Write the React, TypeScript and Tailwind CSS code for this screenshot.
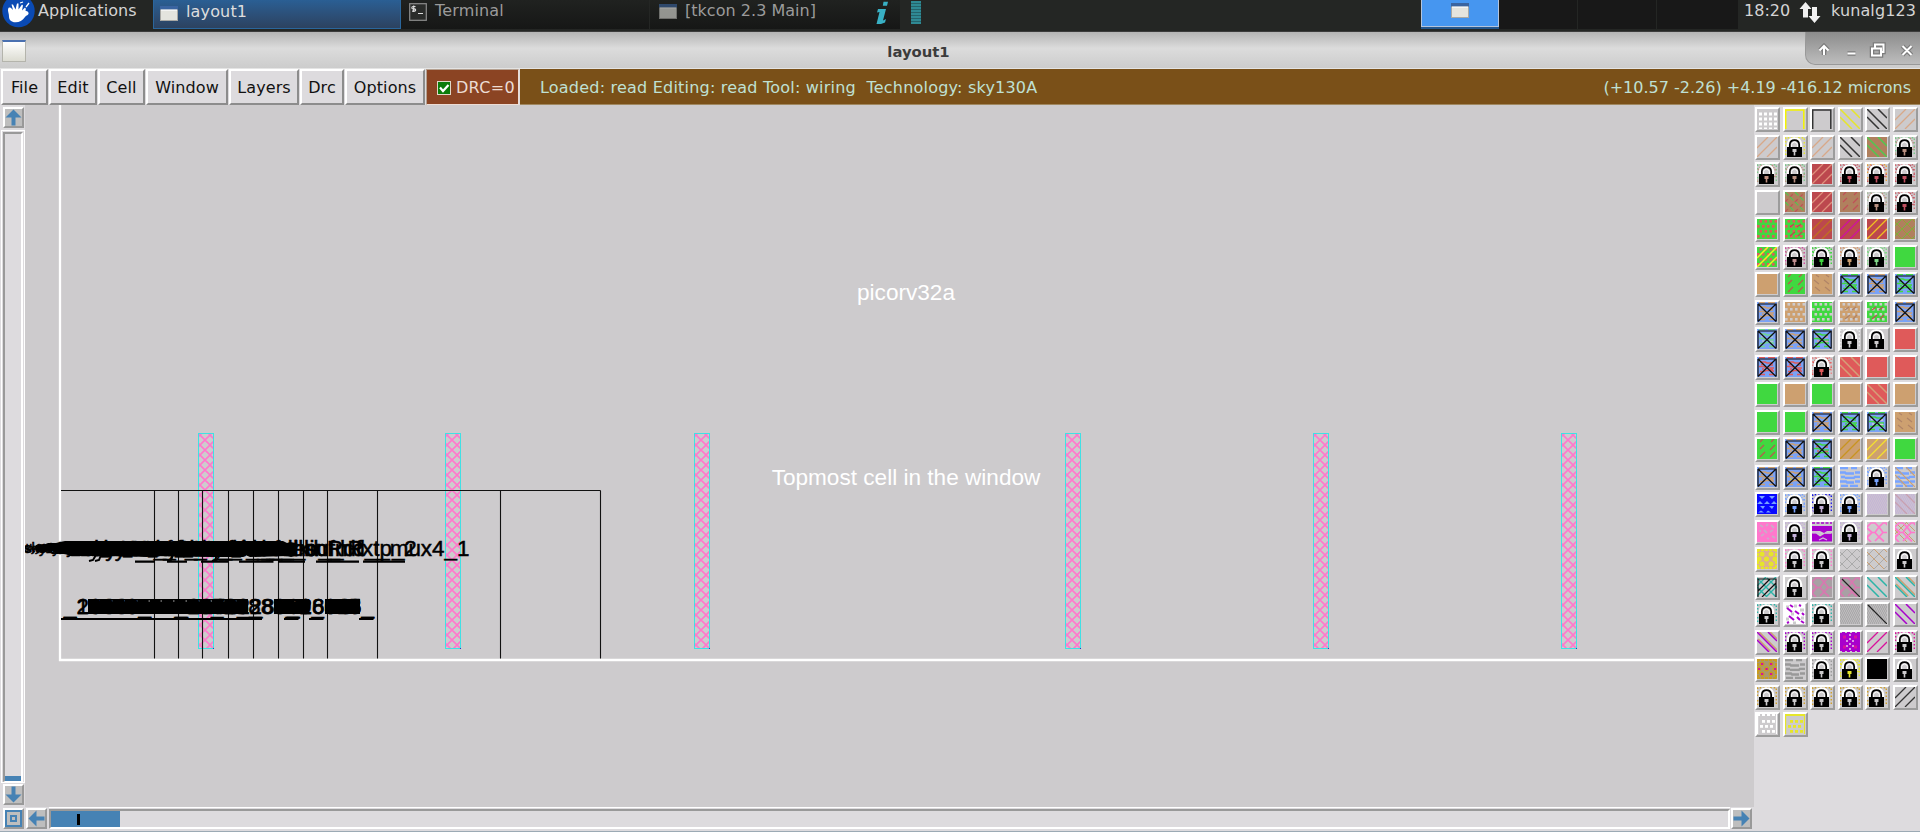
import React from "react";

const SANS = "font-['DejaVu_Sans',sans-serif]";

/* ---------- layer palette ---------- */

type Tile = { k: string; a?: string; b?: string; c?: string };

const GRN = "#40d840";
const TAN = "#cda070";
const RED = "#bc484e";
const CORAL = "#df5a5a";
const BRN = "#b0805e";
const DARK = "#333333";
const YEL = "#e6e62a";
const GOLD = "#cfa02c";
const BLU = "#78a4ff";
const LAV = "#c4b0d8";
const PNK = "#ff78cc";
const PUR = "#a800cc";
const TEAL = "#2cb4a8";
const MAG = "#d8109c";
const GRY = "#999999";
const BG = "#cdcbcd";

const s = (a: string): Tile => ({ k: "solid", a });
const bk = (a: string, b = BG, c?: string): Tile => ({ k: "back", a, b, c });
const fw = (a: string, b = BG): Tile => ({ k: "fwd", a, b });
const lk = (a: string = BG, b: string = a): Tile => ({ k: "lock", a, b });
const xb = (a: string, b: string = a): Tile => ({ k: "xbox", a, b });
const dt = (a: string, b: string, c?: string): Tile => ({ k: "dots", a, b, c });
const fl = (a: string, b: string): Tile => ({ k: "fleck", a, b });
const wv = (a: string, b = BG, c?: string): Tile => ({ k: "wave", a, b, c });
const cr = (a: string, b = BG, c: string = a): Tile => ({ k: "cross", a, b, c });

const TILES: Tile[] = [
  { k: "grid", a: "#ffffff" }, { k: "frame", a: "#f4f400" }, { k: "frame", a: "#333333" }, bk(YEL), bk(DARK), fw("#d8a888"),
  fw("#d8a888"), lk(YEL, BG), fw("#d8a888"), bk(DARK), bk("#50c850", BRN), lk("#7cc88a", "#b89080"),
  lk("#7cc88a", "#c09080"), lk("#7cc88a", "#b89080"), fw("#e0907c", RED), lk("#d07078", "#c05060"), lk("#e8a040", "#c05060"), lk("#d07078", "#c05060"),
  s(BG), { k: "weave", a: "#50c850", b: BRN, c: "#c05058" }, fw("#e0907c", RED), fl("#c05058", BRN), lk("#a8c0a0", "#b89080"), lk("#d07078", "#c05060"),
  dt(CORAL, GRN), dt(CORAL, GRN, RED), fw("#c07020", RED), fw("#d010a0", RED), fw("#f0c020", RED), cr("#70b840", BRN, "#98a030"),
  { k: "dotline", a: "#f0f020", b: GRN, c: CORAL }, lk("#d050a0", "#c09090"), lk(GRN), lk("#dc9a70", TAN), lk("#80d888"), s(GRN),
  s(TAN), fl("#b85850", GRN), { k: "bfleck", a: "#b08468", b: TAN }, xb(GRN), xb(TAN), xb(GRN),
  xb(TAN), dt(BG, TAN), dt(BG, GRN), dt(BG, TAN, "#b08468"), dt(BG, GRN, "#b85850"), xb(TAN, "#c8b8a8"),
  xb("#70d890", "#b0c8d0"), xb(TAN, "#a8b0c0"), xb(GRN, "#d89ab0"), lk("#eeeeee", BG), lk(BG), s(CORAL),
  xb(CORAL), xb(CORAL), lk("#e88888", CORAL), bk("#d4a078", CORAL), s(CORAL), s(CORAL),
  s(GRN), s(TAN), s(GRN), s(TAN), bk("#d4a078", CORAL), s(TAN),
  s(GRN), s(GRN), xb(TAN), xb(GRN), xb(GRN, "#d8c8d8"), { k: "bfleck", a: "#b08468", b: TAN },
  fl("#b85850", GRN), xb(TAN), xb(GRN, "#d06060"), fw("#c89420", TAN), fw("#f4e030", TAN), s(GRN),
  xb(TAN), xb(TAN, "#e0c840"), xb(GRN), wv(BLU), lk(BLU), wv(BLU, BG, TAN),
  { k: "tri", a: "#0808ff", b: BLU }, lk(BLU), lk("#1818e8", LAV), lk(BLU), { k: "dither", a: LAV }, { k: "dither", a: LAV, c: "#c8a0b0" },
  { k: "pebble", a: PNK, b: "#ccaac8" }, lk(LAV), { k: "band", a: PUR, b: "#d0b8d8" }, lk(LAV), { k: "rings", a: PNK }, { k: "rings", a: PNK, c: TAN },
  { k: "sun", a: YEL, b: "#dcb090" }, lk(PNK, BG), lk(PNK, BG), cr("#aaaaaa"), cr("#aaaaaa", BG, TAN), lk(),
  { k: "tealx", a: TEAL }, lk(), { k: "rings", a: "#d878b0", b: "#a8a0a4" }, { k: "rings", a: "#d878b0", b: "#a8a0a4", c: "slash" }, bk(TEAL), bk(TEAL, BG, TAN),
  lk(TEAL, BG), { k: "pfleck", a: PUR }, lk(TEAL, BG), { k: "dither", a: "#a0a0a0" }, { k: "dither", a: "#a0a0a0", c: "slash" }, bk(PUR),
  bk(PUR, BG, TAN), lk(PUR, BG), lk(PUR, BG), { k: "squares", a: PUR, b: MAG }, fw(MAG), lk(MAG, BG),
  { k: "sun", a: "#c89c20", b: "#a89870", c: MAG }, wv(GRY), lk("#999999", BG), lk(YEL), s("#000000"), lk(),
  lk(GOLD, BG), lk(GOLD, BG), lk(GOLD, BG), lk(GOLD, BG), lk(GOLD, BG), fw(DARK),
  { k: "rows", a: "#ffffff" }, { k: "rows", a: YEL, c: YEL },
];

function TileArt({ t }: { t: Tile }) {
  const a = t.a ?? BG;
  const b = t.b ?? BG;
  const pts4 = [0, 1, 2, 3];
  switch (t.k) {
    case "solid":
      return <rect width="20" height="20" fill={a} />;
    case "grid":
      return <g fill={a}>{pts4.map((i) => pts4.map((j) => <rect key={`${i}${j}`} x={2 + i * 5} y={3.5 + j * 5} width="3" height="3" />))}</g>;
    case "frame":
      return <path d="M0.700 20V1H18.800V20" fill="none" stroke={a} strokeWidth="1.500" />;
    case "back":
      return (
        <g>
          <rect width="20" height="20" fill={b} />
          {t.c && <path d="M0 8L12 20M0 0L20 20M11 0L20 9" stroke={t.c} strokeWidth="1.400" transform="translate(1.200 -1)" />}
          <path d="M0 8L12 20M0 0L20 20M11 0L20 9" stroke={a} strokeWidth="1.500" />
        </g>
      );
    case "fwd":
      return (
        <g>
          <rect width="20" height="20" fill={b} />
          <path d="M0 11L11 0M0 20L20 0M10 20L20 10" stroke={a} strokeWidth="1.300" />
        </g>
      );
    case "lock":
      return (
        <g>
          <path d="M0.500 9V0.700h19v18M0.500 13v7" stroke={a} strokeWidth="1.800" strokeDasharray="1.500 2" fill="none" opacity={a === BG ? 0 : 1} />
          <path d="M1 6L5 1M15 1l4 6M17.500 13l2-3M0.500 18v-3" stroke={b} strokeWidth="1.500" strokeDasharray="1.500 1" opacity={b === BG ? 0 : 1} />
          <path d="M4.500 12V7.500Q5 3 9.500 3T14.500 7.500V12" fill="none" stroke="#ffffff" strokeWidth="5.500" />
          <path d="M4.800 11V7.500Q5.200 3.200 9.500 3.200T14.200 7.500V11" fill={BG} stroke="#000000" strokeWidth="1.700" />
          <path d="M6.600 10V7.500Q7.200 5 9.500 5T12.400 7.500V10" fill={BG} stroke="#ffffff" strokeWidth="1" />
          <rect x="2" y="10" width="15" height="10.500" fill="#000000" />
          <path d="M7.500 12h4v3h-1.200v3.500H8.700V15H7.500z" fill={b} />
        </g>
      );
    case "xbox":
      return (
        <g>
          <rect width="20" height="20" fill="#7aa2f6" />
          <path d="M2 0.500h6M11 0.500h7" stroke={a} strokeWidth="1.400" />
          <path d="M3 5h5l2 1h6M2 9.500h5l2 1.500h8M3 14.500h4l2-1h6l2 1M2 17.500h6M12 17.500h5" stroke={a} strokeWidth="1.700" fill="none" />
          <path d="M4 7.500h3M13 8h3M5 12h2M13 12.500h3" stroke={b} strokeWidth="1.600" />
          <path d="M1 2h18.200v17.500M1 2v17.500M1 2l18 17.500M19 2L1 19.500" stroke="#101010" strokeWidth="1.200" fill="none" />
        </g>
      );
    case "dots":
      return (
        <g>
          <rect width="20" height="20" fill={b} />
          {[1, 6, 11, 16].map((y, j) => [0, 5, 10, 15].map((x) => <rect key={`${x}-${y}`} x={x + (j % 2 ? 0 : 2.5)} y={y} width="2.600" height="2.600" fill={a} />))}
          {t.c && <path d="M5 8l4-3M12 8l4-3M5 17l5-4M13 17l4-4" stroke={t.c} strokeWidth="1.300" />}
        </g>
      );
    case "dotline":
      return (
        <g>
          <rect width="20" height="20" fill={b} />
          {[1, 6, 11, 16].map((y, j) => [0, 5, 10, 15].map((x) => <rect key={`${x}-${y}`} x={x + (j % 2 ? 0 : 2.5)} y={y} width="2.600" height="2.600" fill={t.c} />))}
          <path d="M0 11L11 0M0 20L20 0M10 20L20 10" stroke={a} strokeWidth="1.500" />
        </g>
      );
    case "fleck":
      return (
        <g>
          <rect width="20" height="20" fill={b} />
          <path d="M3 3l3-3M14 3l3-3M3 10l4-4M13 11l5-5M3 18l5-5M13 18l5-5" stroke={a} strokeWidth="1.200" />
        </g>
      );
    case "bfleck":
      return (
        <g>
          <rect width="20" height="20" fill={b} />
          <path d="M4 1l3 2M14 1l3 2M2 6l5 4M12 6l5 4M3 13l5 4M13 13l5 4" stroke={a} strokeWidth="1.200" />
        </g>
      );
    case "weave":
      return (
        <g>
          <rect width="20" height="20" fill={b} />
          <path d="M0 10L10 0M0 20L20 0M10 20L20 10" stroke={t.c} strokeWidth="1.200" strokeDasharray="4 3" />
          <path d="M0 10l10 10M0 0l20 20M10 0l10 10" stroke={a} strokeWidth="1.200" strokeDasharray="5 2" />
        </g>
      );
    case "cross":
      return (
        <g>
          <rect width="20" height="20" fill={b} />
          <path d="M0 7L7 0M0 17L17 0M7 20L20 7M17 20l3-3" stroke={a} strokeWidth="1" />
          <path d="M0 13l7 7M0 3l17 17M7 0l13 13M17 0l3 3" stroke={t.c} strokeWidth="1" />
        </g>
      );
    case "wave":
      return (
        <g>
          <rect width="20" height="20" fill={b} />
          <path d="M0 1.200h8M11 1.200h6M0 5.500h5l1 1h8M15 5.500h5M1 10h4M5 10.800h9l1-1h5M0 14.500h6l1 1h7M15 14.500h5M1 18.800h7M10 18.800h8" stroke={a} strokeWidth="2.300" fill="none" />
          {t.c && <path d="M0 8L12 20M0 0L20 20M11 0L20 9" stroke={t.c} strokeWidth="1.100" />}
        </g>
      );
    case "tri":
      return (
        <g>
          <rect width="20" height="20" fill={a} />
          <path d="M2 2h6L5 5zM12 2h6l-3 3zM0 10l3-3 3 3zM7 10l3-3 3 3zM14 10l3-3 3 3zM3 12h5l-2 3zM12 12h5l-2 3zM1 18.500l3-2 3 2zM9 18.500l2-2 3 2z" fill={b} />
        </g>
      );
    case "dither":
      return (
        <g>
          {Array.from({ length: 10 }, (_, i) => (
            <path key={i} d={`M0 ${i * 2 + 1}h20`} stroke={a} strokeWidth="1.400" strokeDasharray="1.500 0.500" strokeDashoffset={i % 2} />
          ))}
          {t.c === "slash" && <path d="M1 1l19 19" stroke="#222222" strokeWidth="1.200" />}
          {t.c && t.c !== "slash" && <path d="M0 8L12 20M0 0L20 20M11 0L20 9" stroke={t.c} strokeWidth="1.300" />}
        </g>
      );
    case "pebble":
      return (
        <g>
          <rect width="20" height="20" fill={a} />
          <path d="M3 3l3 2M9 4l2-2M14 3l3 3M2 9h2M7 8l3 3M13 10l3-2M4 14l3-2M10 16l2 1M15 14l3 2" stroke={b} strokeWidth="1.800" />
        </g>
      );
    case "band":
      return (
        <g>
          <path d="M0 1h20" stroke={a} strokeWidth="1.500" strokeDasharray="3 1.500" />
          <path d="M0 4h20v5h-5l-3 2-4-2H0z" fill={a} />
          <path d="M0 11.500h4l4 3 5-3h7v8H0z" fill={a} />
          <path d="M1 10.500h4l4 2M13 11h6M7 18l4-2 4 2" stroke={b} strokeWidth="1.300" fill="none" />
        </g>
      );
    case "rings":
      return (
        <g>
          <rect width="20" height="20" fill={b} />
          {t.c && t.c !== "slash" && <path d="M0 8L12 20M0 0L20 20M11 0L20 9M0 12L12 0" stroke={t.c} strokeWidth="1" />}
          <path d="M0 5L4 1h4l4 4 4-4h3l1 2M0 6l5 4.500L0 15M5 10.500h3L12 5l4 5.500h4M8 10.500l4 4.500 4-4.500M5 10.500L0 16l4 4M12 15l-4 4M12 15l5 4.500" fill="none" stroke={a} strokeWidth="1.700" />
          {t.c === "slash" && <path d="M2 2l18 18" stroke="#222222" strokeWidth="1.200" />}
        </g>
      );
    case "sun":
      return (
        <g>
          <rect width="20" height="20" fill={b} />
          <path d="M0 1h20M0 19h20M1 0v20M19 0v20" stroke={a} strokeWidth="2" strokeDasharray="3 1" />
          {[[5, 5], [14, 5], [9.5, 10], [5, 15], [14, 15], [2, 10], [18, 10]].map(([x, y]) => (
            <g key={`${x}-${y}`}>
              <circle cx={x} cy={y} r="2.500" fill={a} />
              {t.c && <rect x={x - 1} y={y - 1} width="2.200" height="2" fill={t.c} />}
            </g>
          ))}
        </g>
      );
    case "tealx":
      return (
        <g>
          <path d="M0 9L9 0M0 19L19 0M9 20L20 9M0 10l10 10M0 1l19 19M10 1l10 10" stroke={a} strokeWidth="1.400" />
          <path d="M1 20V2h18v18M1 14L13 2M5 20L19 6" fill="none" stroke="#101010" strokeWidth="1.200" />
        </g>
      );
    case "pfleck":
      return (
        <g>
          <rect width="20" height="20" fill="#ffffff" />
          <path d="M1 3h3M9 2h3M15 6h4M6 10h3M1 15h3M16 14h3M8 19h3" stroke={BG} strokeWidth="3" />
          <path d="M5 1l3 2M14 1l2 1M2 4l5 4M10 7l4 3M17 9l2 2M4 12l5 4M12 13l3 3M16 17l3 2M2 19l2-1" stroke={a} strokeWidth="2" />
        </g>
      );
    case "squares":
      return (
        <g>
          <rect width="20" height="20" fill={a} />
          <path d="M0 0.500h20M0 19.500h20" stroke={BG} strokeWidth="1" strokeDasharray="2 3" />
          <path d="M9 3h2M9 7h2M6 9h2M12 9h2M9 12h2M6 14h2M12 14h2M9 17h2" stroke="#e8c8e8" strokeWidth="1.300" />
          <path d="M3 5h3M14 5h3M3 15h3M14 15h3" stroke={b} strokeWidth="3" />
        </g>
      );
    case "rows":
      return (
        <g>
          <path d="M0 1h20" stroke={a} strokeWidth="2" strokeDasharray={t.c ? "none" : "3 2"} />
          <path d="M0.600 0v20M19.500 0v20" stroke={a} strokeWidth="1.200" />
          {[6, 11, 16].map((y, j) => [0, 5, 10].map((x) => <rect key={`${x}-${y}`} x={x + (j % 2 ? 3 : 5)} y={y} width="3" height="2.800" fill={a} />))}
        </g>
      );
    default:
      return null;
  }
}

function Palette() {
  return (
    <div className="w-[166px] shrink-0 bg-[#dddbde] pt-[2px] pl-[1px]">
      <div className="grid grid-cols-[repeat(6,27.5px)] auto-rows-[27.5px]">
        {TILES.map((t, i) => (
          <div key={i} className="h-[25px] w-[25px] border-2 border-t-white border-l-white border-r-[#9c9c9c] border-b-[#9c9c9c] bg-[#cdcbcd]">
            <svg viewBox="0 0 20 20" className="block h-[20px] w-[20px]">
              <TileArt t={t} />
            </svg>
          </div>
        ))}
      </div>
    </div>
  );
}

/* ---------- layout canvas (origin at window x=25, y=105) ---------- */

const STRAPS = [198, 445, 694, 1065, 1313, 1561];
const EDGES = [154, 178, 202, 228, 253, 278, 303, 327, 377, 500, 600];

/* cell names: centre, label, size */
const NAMES: [number, string, number][] = [
  [330, "sky130_fd_sc_hd__mux4_1", 22.4],
  [280.5, "sky130_fd_sc_hd__dfxtp_2", 22.4],
  [228, "sky130_fd_sc_hd__ebufnR", 22.4],
  [213, "sky130_fd_sc_hd__clkinR", 22.4],
  [150, "sky130_fd_sc_hd__o21ai_2", 16],
  [120, "sky130_fd_sc_hd__nand2_2", 15],
  [115, "sky130_fd_sc_hd__inv_4", 13.5],
  [94, "sky130_fd_sc_hd__decap_6", 11],
  [82, "sky130_fd_sc_hd__conb_1", 10],
];

/* instance ids: centre, label */
const IDS: [number, string][] = [
  [330.5, "_26045_"],
  [330.5, "_28318_"],
  [280.5, "_28060_"],
  [254.5, "_20888_"],
  [219, "_21762_"],
  [218, "_28426_"],
  [107.5, "_28468_"],
  [107.5, "_16649_"],
];

/* underscore runs left visible below the merged labels */
const NAME_RULES = "M135 561.700H155M167 561.700H187M201 561.700H228M239 561.700H273.500M278 561.700H305M316 561.700H359M363 561.700H405";
const ID_RULES = "M61 619H262M284 619H298.500M309 619H323.500M359 619H373.500";

function Canvas() {
  return (
    <svg viewBox="25 105 1729 702" className="block h-[702px] w-[1729px] bg-[#cdcbcd]" fontFamily="'Liberation Sans', sans-serif">
      <defs>
        <pattern id="hatch" y="5" width="10" height="10" patternUnits="userSpaceOnUse" patternTransform="translate(2 7)">
          <path d="M-1 -1L11 11M11 -1L-1 11" stroke="#ff78cc" strokeWidth="1.600" />
        </pattern>
      </defs>
      {STRAPS.map((x) => (
        <g key={x} transform={`translate(${x} 433)`}>
          <rect x="0.500" y="0.500" width="15" height="215" fill="url(#hatch)" stroke="#40e0e4" strokeWidth="1" />
          <rect x="15" y="215" width="1" height="1" fill="#3030c0" />
        </g>
      ))}
      <path d="M60 105V660H1754" fill="none" stroke="#ffffff" strokeWidth="2.300" />
      <path d="M61 490.500H600.500" stroke="#111111" strokeWidth="1.200" />
      {EDGES.map((x) => (
        <path key={x} d={`M${x + 0.5} 490.500V658.500`} stroke="#111111" strokeWidth="1.100" />
      ))}
      <path d="M36 545l5-1 3 1 4-2h8l4-1 5-1h103l3 1 2-1h110l4 2 3-1 6 1v13l-5 1-4-1-37 1-4-2-3 2h-31l-60-1-5 1-30-1H70l-7-3h-8l-3-2-10 1-6-2z" fill="#000000" />
      <path d="M88 599H248V614H88zM274 599H309V614H274zM325 599H360V614H325z" fill="#000000" />
      <path d="M98.500 601h1.500M111 601h1.500M123.500 601h1.500M136 601h1.500M148.500 601h1.500M160.500 601h1.500M173 601h1.500M185.500 601h1.500M198 601h1.500M210.500 601h1.500M223 601h1.500M235 601h1.500M282 601h1.500M294.500 601h1.500" stroke="#b0b0b0" strokeWidth="1" />
      <path d={`${NAME_RULES}${ID_RULES}`} stroke="#000000" strokeWidth="2.200" />
      <path d="M89 561l4-1 3-5M95 561l4-1 2-5M167 561l4-1 2-6M212 561l3-1 2-5" stroke="#000000" strokeWidth="2" fill="none" />
      <g textAnchor="middle" fill="#000000" stroke="#000000" strokeWidth="0.500">
        {NAMES.map(([x, name, size]) => (
          <text key={name} x={x} y={548.5 + size * 0.33} fontSize={size}>{name}</text>
        ))}
        {IDS.map(([x, id]) => (
          <text key={id} x={x} y="613.500" fontSize="22.300">{id}</text>
        ))}
      </g>
      <g textAnchor="middle" fill="#ffffff" fontSize="22.600">
        <text x="906" y="300">picorv32a</text>
        <text x="906" y="485">Topmost cell in the window</text>
      </g>
    </svg>
  );
}

/* ---------- window chrome ---------- */

function Arrow({ turn }: { turn: string }) {
  return (
    <div className="h-[21px] w-[21px] shrink-0 border-2 border-t-white border-l-white border-r-[#999] border-b-[#999] bg-[#bebebe]">
      <svg viewBox="0 0 17 17" className={`block h-[17px] w-[17px] ${turn}`}>
        <path d="M8.500 0.500L16.500 8.500H10.500V16.500H6.500V8.500H0.500z" fill="#4682b4" />
      </svg>
    </div>
  );
}

function MiniWindow({ className }: { className: string }) {
  return (
    <svg viewBox="0 0 18 15" preserveAspectRatio="none" className={className}>
      <rect x="0.500" y="0.500" width="17" height="14" fill="#e4e4de" stroke="#a8a8a4" />
      <rect x="0" y="0" width="18" height="3.500" fill="#3a64a0" />
      <rect x="1" y="3.500" width="16" height="1.500" fill="#ffffff" opacity=".6" />
    </svg>
  );
}

function Taskbar() {
  return (
    <div className={`flex h-[32px] shrink-0 items-start overflow-hidden border-b border-[#3c3c3c] bg-[#242624] text-[16px] leading-[22px] text-[#d4d4d4] ${SANS}`}>
      <div className="flex w-[153px] shrink-0 items-start">
        <svg viewBox="0 0 36 28" className="block h-[28px] w-[36px] shrink-0">
          <circle cx="18.500" cy="11" r="16.200" fill="#0a4ab4" />
          <path d="M8.500 13C7 8 9 6 12 9L13 10 11.500 4.500 13 4.500 15.500 9.500 17 3.500 18.500 3.500 18.500 9.500 22 4.500 23 5.500 22 10.500 25 7.500 26 9C24 12 28 10 28.500 13 29 15 26 15.500 25 17 22 22 16 23.500 12 21.500 8 19.500 9.500 16 8.500 13z" fill="#ffffff" />
          <path d="M20 3L23 2M26 7l3-4" stroke="#ffffff" strokeWidth="1.300" />
        </svg>
        <span className="ml-[2px] tracking-[0.08px]">Applications</span>
      </div>
      <div className="flex h-[29px] w-[248px] shrink-0 items-start border border-t-0 border-[#2a669c] bg-linear-to-b from-[#2a5f94] to-[#2c4260] pl-[6px] text-[#dedede]">
        <MiniWindow className="mt-[6px] h-[15px] w-[18px]" />
        <span className="ml-[8px] mt-[1px] tracking-[0.15px]">layout1</span>
      </div>
      <div className="flex h-[29px] w-[249px] shrink-0 items-start border-r border-[#242624] bg-linear-to-b from-[#202220] to-[#161716] pl-[8px] text-[#9b9b9b]">
        <svg viewBox="0 0 18 18" className="mt-[3px] block h-[18px] w-[18px]">
          <rect x="0.700" y="0.700" width="16.600" height="16.600" fill="#2a2c2a" stroke="#8c8c8c" strokeWidth="1.200" />
          <path d="M6.500 3.500H4a1 1 0 0 0 0 2.300h1.500a1 1 0 0 1 0 2.300H3M4.700 2.500v6.600M9 10.500h5" stroke="#dddddd" strokeWidth="1.200" fill="none" />
        </svg>
        <span className="ml-[8px] tracking-[0.15px]">Terminal</span>
      </div>
      <div className="flex h-[29px] w-[250px] shrink-0 items-start bg-linear-to-b from-[#202220] to-[#161716] pl-[9px] text-[#9b9b9b]">
        <MiniWindow className="mt-[4px] h-[15px] w-[18px] opacity-60" />
        <span className="ml-[8px] tracking-[0.03px]">[tkcon 2.3 Main]</span>
        <svg viewBox="0 0 14 24" className="ml-auto mr-[11px] mt-[1px] block h-[24px] w-[14px]">
          <path d="M8.500 0.800h4.500L12 4.800H7.800zM3 8h8L8 19.500l3-1.500-1 3.500-4 1.500H1.500L4.500 11 2 11.500z" fill="#38b0c4" />
        </svg>
      </div>
      <svg viewBox="0 0 10 23" className="ml-[11px] mt-[1px] block h-[23px] w-[10px]">
        <rect width="10" height="23" fill="#24636b" />
        {[1, 4, 7, 10, 13, 16, 19, 22].map((y) => <path key={y} d={`M0 ${y}h10`} stroke="#38a4b0" strokeWidth="1.200" />)}
      </svg>
      <div className="ml-auto flex">
        <div className="flex h-[29px] w-[78px] justify-center border-b-2 border-[#24568c] bg-[#b4c4dc] px-[1px] pb-[1px]">
          <div className="flex w-full justify-center bg-[#4696f0] pt-[3px]">
            <MiniWindow className="h-[15px] w-[18px]" />
          </div>
        </div>
        <div className="h-[29px] w-[79px] border-r border-[#242624] bg-[#181818]" />
        <div className="h-[29px] w-[79px] border-r border-[#242624] bg-[#181818]" />
        <div className="h-[29px] w-[81px] bg-[#181818]" />
        <span className="ml-[6px] w-[46px] whitespace-nowrap">18:20</span>
        <svg viewBox="0 0 22 21" className="ml-[9px] mt-[2px] block h-[21px] w-[22px]">
          <path d="M6.500 0L12.500 7H9v8.500H4V7H0.500zM15.500 21l-6-7H13V5h5v9h3.500z" fill="#f0f0f0" />
        </svg>
        <span className="ml-[10px] mr-[4px] whitespace-nowrap tracking-[0.1px]">kunalg123</span>
      </div>
    </div>
  );
}

function TitleBar() {
  return (
    <div className="flex h-[37px] shrink-0 items-start border-b border-[#e4e4e4] bg-linear-to-b from-[#b4b4b4] via-[#dcdcdc] via-45% to-[#cccccc]">
      <div className="ml-[2px] mt-[8px] h-[22px] w-[24px] border border-[#b4b4ac] border-t-2 border-t-[#4a70b0] bg-linear-to-b from-white to-[#dcdcd2]" />
      <div className={`w-[1779px] pt-[8px] text-center text-[14.800px] leading-[23px] font-bold text-[#3c3c3c] ${SANS}`}>
        <span className="ml-[6px]">layout1</span>
      </div>
      <div className="h-[33px] w-[115px] rounded-bl-[10px] border-b border-l border-[#999] bg-linear-to-b from-[#8c8c8c] to-[#bdbdbd]">
        <svg viewBox="0 0 114 32" className="block h-[32px] w-[114px]">
          <g stroke="#7c7c7c" strokeWidth="4.500" fill="none">
            <path d="M18 23v-9M14 18l4-4 4 4M41.500 21.500h8M66 16.500h9v7h-9zM69 16v-3.500h8.500V20H75M96.500 14l9 9M105.500 14l-9 9" />
          </g>
          <g stroke="#ffffff" strokeWidth="2" fill="none">
            <path d="M18 23v-9M13.500 18.500L18 14l4.500 4.500M41.500 21.500h8M66 16.500h9v7h-9zM69 16v-3.500h8.500V20H75M96.500 14l9 9M105.500 14l-9 9" />
          </g>
        </svg>
      </div>
    </div>
  );
}

const MENUS: [string, string][] = [
  ["File", "w-[48px]"],
  ["Edit", "w-[49px]"],
  ["Cell", "w-[48px]"],
  ["Window", "w-[83px]"],
  ["Layers", "w-[71px]"],
  ["Drc", "w-[45px]"],
  ["Options", "w-[81px]"],
];

function MenuBar() {
  return (
    <div className={`flex h-[36px] shrink-0 bg-[#dddbde] pl-[1px] text-[16px] leading-[33px] whitespace-nowrap text-[#111] ${SANS}`}>
      {MENUS.map(([label, w]) => (
        <div key={label} className={`${w} h-full shrink-0 pr-[1px]`}>
          <div className="h-full border-2 border-t-white border-l-white border-r-[#8c8c8c] border-b-[#8c8c8c] text-center tracking-[0.1px]">{label}</div>
        </div>
      ))}
      <div className="flex w-[93px] shrink-0 items-center border border-t-[#b4a090] border-r-[#ecdcd4] border-b-[#ecdcd4] border-l-[#b4a090] bg-[#8b4423] pt-px pl-[10px] tracking-[0.3px] text-[#ecdcd4]">
        <svg viewBox="0 0 14 14" className="mr-[5px] block h-[14px] w-[14px] shrink-0">
          <rect x="0.500" y="0.500" width="13" height="13" fill="#0a7c0a" stroke="#e0d8c8" />
          <path d="M3 6.500L6 10l5.500-6" fill="none" stroke="#ffffff" strokeWidth="2.200" />
        </svg>
        DRC=0
      </div>
      <div className="ml-[1px] flex flex-1 items-center justify-between border-b border-[#a08860] bg-[#7a5018] pt-[2px] pr-[9px] pl-[20px] text-[#bfe0d4]">
        <span className="whitespace-pre tracking-[0.21px]">Loaded: read Editing: read Tool: wiring  Technology: sky130A</span>
        <span>(+10.57 -2.26) +4.19 -416.12 microns</span>
      </div>
    </div>
  );
}

export default function App() {
  return (
    <div className="flex h-[832px] w-[1920px] flex-col overflow-hidden bg-[#dddbde]">
      <Taskbar />
      <TitleBar />
      <MenuBar />
      <div className="flex h-[726px] shrink-0">
        <div className="flex w-[1754px] flex-col">
          <div className="flex h-[702px]">
            <div className="flex w-[25px] shrink-0 flex-col pt-[2px] pl-[3px]">
              <Arrow turn="rotate-0" />
              <div className="mt-[2px] -ml-[2px] flex h-[653px] w-[24px] flex-col justify-end border border-white px-px pt-px">
                <div className="flex h-full flex-col justify-end border-2 border-t-[#999] border-b-[1px] border-l-[#999] border-r-white border-b-white">
                  <div className="h-[5px] bg-[#4682b4]" />
                </div>
              </div>
              <div className="mt-px"><Arrow turn="rotate-180" /></div>
            </div>
            <Canvas />
          </div>
          <div className="flex h-[23px] items-start pt-px pl-[3px]">
            <div className="h-[21px] w-[21px] shrink-0 border-2 border-t-white border-l-white border-r-[#999] border-b-[#999] bg-[#bebebe]">
              <svg viewBox="0 0 17 17" className="block h-[17px] w-[17px]">
                <rect x="1" y="1" width="15" height="15" fill="none" stroke="#4682b4" strokeWidth="2" />
                <rect x="6" y="6" width="5" height="5" fill="none" stroke="#4682b4" strokeWidth="2" />
              </svg>
            </div>
            <div className="ml-[2px]"><Arrow turn="-rotate-90" /></div>
            <div className="-mt-px ml-[2px] h-[23px] w-[1681px] shrink-0 border-t border-t-white pt-px">
              <div className="flex h-[20px] w-full items-center border-2 border-t-[#999] border-l-[#999] border-r-white border-b-white">
                <div className="flex h-full w-[69px] items-center bg-[#4682b4] pl-[26px]">
                  <div className="h-[11px] w-[3px] bg-black" />
                </div>
              </div>
            </div>
            <div className="ml-px"><Arrow turn="rotate-90" /></div>
          </div>
        </div>
        <Palette />
      </div>
      <div className="h-px shrink-0 bg-[#9caab4]" />
    </div>
  );
}
